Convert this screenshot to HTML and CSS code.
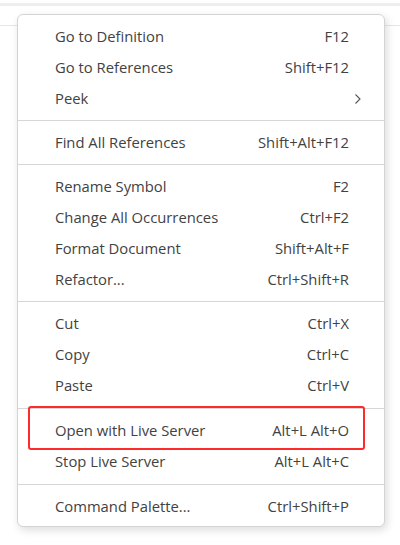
FILE: index.html
```html
<!DOCTYPE html>
<html>
<head>
<meta charset="utf-8">
<link rel="stylesheet" href="styles.css">
</head>
<body>
<div class="topbar"></div>
<div class="editor">
  <div class="menu">
    <div class="item"><span class="label">Go to Definition</span><span class="key">F12</span></div>
    <div class="item"><span class="label">Go to References</span><span class="key">Shift+F12</span></div>
    <div class="item"><span class="label">Peek</span><span class="key"></span><svg class="chev" width="8" height="12" viewBox="0 0 8 12"><path d="M1.5 1.5 L6 6 L1.5 10.5" fill="none" stroke="#555" stroke-width="1.1"/></svg></div>
    <div class="sep"></div>
    <div class="item"><span class="label">Find All References</span><span class="key">Shift+Alt+F12</span></div>
    <div class="sep"></div>
    <div class="item"><span class="label">Rename Symbol</span><span class="key">F2</span></div>
    <div class="item"><span class="label">Change All Occurrences</span><span class="key">Ctrl+F2</span></div>
    <div class="item"><span class="label">Format Document</span><span class="key">Shift+Alt+F</span></div>
    <div class="item"><span class="label">Refactor...</span><span class="key">Ctrl+Shift+R</span></div>
    <div class="sep"></div>
    <div class="item"><span class="label">Cut</span><span class="key">Ctrl+X</span></div>
    <div class="item"><span class="label">Copy</span><span class="key">Ctrl+C</span></div>
    <div class="item"><span class="label">Paste</span><span class="key">Ctrl+V</span></div>
    <div class="sep sep-loose"></div>
    <div class="item highlight"><span class="label">Open with Live Server</span><span class="key">Alt+L Alt+O</span></div>
    <div class="item"><span class="label">Stop Live Server</span><span class="key">Alt+L Alt+C</span></div>
    <div class="sep sep-loose"></div>
    <div class="item"><span class="label">Command Palette...</span><span class="key">Ctrl+Shift+P</span></div>
  </div>
</div>
</body>
</html>
```
FILE: styles.css
```css
html, body {
  margin: 0;
  padding: 0;
  background: #ffffff;
  width: 400px;
  height: 545px;
  overflow: hidden;
}
body {
  font-family: "Open Sans", "Noto Sans", sans-serif;
  font-size: 14.8px;
  color: #424242;
  position: relative;
}
.topbar {
  height: 3px;
  margin-top: 3px;
  background: #eeeeee;
}
.editor {
  position: relative;
  height: 536px;
  background: linear-gradient(#ffffff 0, #ffffff 19px, #e6e6e6 19px, #e6e6e6 20px, #ffffff 20px);
}
.menu {
  position: absolute;
  left: 17px;
  top: 8px;
  width: 366px;
  background: #ffffff;
  border: 1px solid #d4d4d4;
  border-radius: 6px;
  box-shadow: 2px 3px 8px rgba(0, 0, 0, 0.14);
  padding: 6px 0 4px;
}
.item {
  position: relative;
  display: flex;
  align-items: center;
  box-sizing: border-box;
  height: 31px;
  padding: 0 35px 2px 37px;
}
.label {
  flex: 1;
}
.key {
  text-align: right;
}
.chev {
  position: absolute;
  right: 22px;
  top: 10px;
}
.sep {
  height: 1px;
  background: #d6d6d6;
  margin: 6px 0;
}
.sep-loose {
  margin-top: 7px;
}
.highlight::after {
  content: "";
  position: absolute;
  left: 10px;
  right: 19px;
  top: -9px;
  bottom: -4px;
  border: 2px solid #ff2a2a;
  border-radius: 3px;
}
```
